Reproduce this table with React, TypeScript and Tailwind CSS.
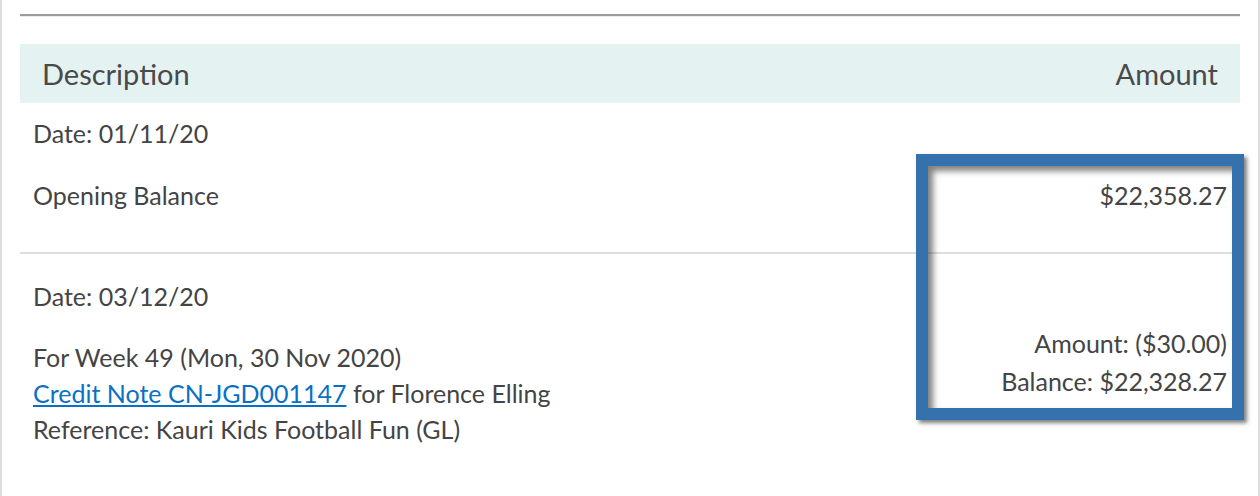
import React from "react";

export default function App() {
  return (
    <div className="relative w-[1260px] h-[496px] bg-white border-l-2 border-r-2 border-[#dcdcdc] px-[18px] font-['Lato',sans-serif] text-[#444444] overflow-hidden">
      {/* rule at top */}
      <div className="mt-[14px] h-[2px] bg-[#9b9b9b]" />
      <div className="h-[1px] bg-[#ececec]" />

      {/* table header */}
      <div className="mt-[27px] h-[59px] bg-[#e4f2f1] flex items-center justify-between px-[22px] text-[29px] leading-[59px] text-[#4a4a4a]">
        <span>Description</span>
        <span>Amount</span>
      </div>

      {/* opening balance */}
      <div className="flex justify-between px-[13px] pt-[12px] pb-[39px] border-b-2 border-[#dedede] text-[25px] leading-[36px]">
        <div>
          <div>Date: 01/11/20</div>
          <div className="mt-[26px]">Opening Balance</div>
        </div>
        <div className="pt-[62px]">$22,358.27</div>
      </div>

      {/* credit note entry */}
      <div className="flex justify-between px-[13px] pt-[24px] text-[25px] leading-[36px]">
        <div>
          <div>Date: 03/12/20</div>
          <div className="mt-[25px]">For Week 49 (Mon, 30 Nov 2020)</div>
          <div>
            <a href="#" className="text-[#0a70c4] underline">
              Credit Note CN-JGD001147
            </a>{" "}
            for Florence Elling
          </div>
          <div>Reference: Kauri Kids Football Fun (GL)</div>
        </div>
        <div className="pt-[46px] text-right leading-[38px]">
          <div>Amount: ($30.00)</div>
          <div>Balance: $22,328.27</div>
        </div>
      </div>

      {/* highlight annotation */}
      <div className="absolute left-[914px] top-[154px] w-[328px] h-[266px] border-[12px] border-[#3471ad] shadow-[3px_3px_4px_rgba(0,0,0,0.5),inset_5px_5px_6px_rgba(0,0,0,0.5)]" />
    </div>
  );
}
